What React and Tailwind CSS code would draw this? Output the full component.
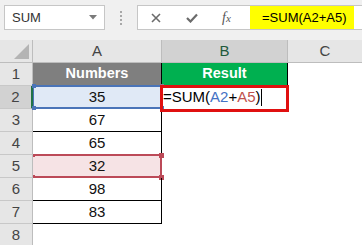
import React from "react";

const FONT = "font-['Liberation_Sans',Arial,sans-serif]";

function RowHead({ n, selected }) {
  return (
    <div
      className={`w-[33px] h-full flex items-center justify-center text-[15px] text-[#444] border-b border-b-[#c8c8c8] ${
        selected ? "bg-[#d2d2d2] border-r-2 border-r-[#217346]" : "bg-[#e6e6e6] border-r border-r-[#bdbdbd]"
      }`}
    >
      {n}
    </div>
  );
}

function Row({ n, a, selected, children, aClass = "", aOverlay = null, bContent = null, bClass = "" }) {
  return (
    <div className="flex h-[23px] shrink-0">
      <RowHead n={n} selected={selected} />
      <div
        className={`relative w-[129px] h-full flex items-center justify-center text-[15px] text-[#111] border-r border-r-black border-b border-b-black ${aClass}`}
      >
        {a}
        {aOverlay}
      </div>
      <div className={`relative w-[126px] h-full ${bClass}`}>{bContent}</div>
      <div className="flex-1 h-full bg-white">{children}</div>
    </div>
  );
}

function Handle({ className }) {
  return <div className={`absolute ${className}`} />;
}

export default function App() {
  return (
    <div className={`w-[362px] h-[245px] overflow-hidden bg-white flex flex-col ${FONT}`}>
      {/* toolbar */}
      <div className="h-[40px] shrink-0 bg-[#f0f0f0] flex items-start pt-[5px]">
        <div className="ml-[4px] w-[101px] h-[25px] bg-white border border-[#c6c6c6] flex items-center justify-between pl-[7px] pr-[7px]">
          <span className="text-[13px] text-[#333] leading-none">SUM</span>
          <svg width="8" height="5" viewBox="0 0 8 5">
            <polygon points="0,0 8,0 4,4.5" fill="#7a7a7a" />
          </svg>
        </div>
        <div className="w-[32px] h-[25px] flex flex-col items-center justify-center gap-[2px]">
          <div className="w-[2px] h-[2px] bg-[#a8a8a8]" />
          <div className="w-[2px] h-[2px] bg-[#a8a8a8]" />
          <div className="w-[2px] h-[2px] bg-[#a8a8a8]" />
          <div className="w-[2px] h-[2px] bg-[#a8a8a8]" />
        </div>
        <div className="flex-1 h-[25px] bg-white border border-[#c6c6c6] border-r-0 flex items-stretch">
          <div className="w-[112px] flex items-center">
            <svg className="ml-[13px]" width="10" height="10" viewBox="0 0 10 10">
              <path d="M1 1 L9 9 M9 1 L1 9" stroke="#6b6b6b" strokeWidth="1.6" />
            </svg>
            <svg className="ml-[25px]" width="12" height="10" viewBox="0 0 12 10">
              <path d="M1 5 L4.5 8.5 L11 1.5" stroke="#6b6b6b" strokeWidth="2.2" fill="none" />
            </svg>
            <span className="ml-[24px] font-['Liberation_Serif',serif] italic text-[14px] text-[#555] leading-none">
              f<span className="text-[11px]">x</span>
            </span>
          </div>
          <div className="w-[104px] bg-[#ffff00] flex items-center pl-[12px] text-[13px] text-black">
            =SUM(A2+A5)
          </div>
          <div className="flex-1" />
        </div>
      </div>

      {/* column headers */}
      <div className="flex h-[23px] shrink-0 border-b border-b-[#bdbdbd] bg-[#e6e6e6]">
        <div className="w-[33px] h-full border-r border-r-[#bdbdbd] relative">
          <svg className="absolute left-0 top-0" width="32" height="22" viewBox="0 0 32 22">
            <polygon points="14,19 29,19 29,4" fill="#b4b4b4" />
          </svg>
        </div>
        <div className="w-[129px] h-full border-r border-r-[#bdbdbd] flex items-center justify-center text-[15px] text-[#444]">
          A
        </div>
        <div className="w-[126px] h-full border-r border-r-[#bdbdbd] bg-[#d2d2d2] flex items-center justify-center text-[15px] text-[#1f5a3c]">
          B
        </div>
        <div className="flex-1 h-full flex items-center justify-center text-[15px] text-[#444]">C</div>
      </div>

      {/* row 1 */}
      <Row
        n={1}
        a={<span className="font-bold text-white text-[14.5px]">Numbers</span>}
        aClass="bg-[#7f7f7f]"
        bClass="bg-[#00b050] border-r border-r-black border-b border-b-black flex items-center justify-center"
        bContent={<span className="font-bold text-white text-[14.5px]">Result</span>}
      />
      {/* row 2 */}
      <Row
        n={2}
        selected
        a="35"
        aClass="bg-[#e0e9f6]"
        aOverlay={
          <>
            <div className="absolute left-0 right-[-1px] top-[-1px] bottom-[-1px] border-y-2 border-y-[#4a74b8] border-l border-l-[#4a74b8]" />
            <Handle className="left-[-1px] top-[-2px] w-[4px] h-[4px] bg-[#4a74b8]" />
            <Handle className="left-[-1px] bottom-[-2px] w-[4px] h-[4px] bg-[#4a74b8]" />
            <Handle className="right-[-3px] top-[-2px] w-[4px] h-[4px] bg-[#8a7a94]" />
            <Handle className="right-[-3px] bottom-[-2px] w-[4px] h-[4px] bg-[#4a74b8]" />
          </>
        }
        bContent={
          <>
            <div className="absolute left-[-2px] top-[-1px] w-[129px] h-[27px] border-[3px] border-[#e01010] z-10" />
            <div className="absolute left-[1px] top-0 h-full flex items-center text-[15px] text-black whitespace-nowrap z-20">
              =SUM(<span className="text-[#4472c4]">A2</span>+<span className="text-[#c0504d]">A5</span>)
              <span className="w-[1px] h-[17px] bg-black inline-block" />
            </div>
          </>
        }
      />
      <Row n={3} a="67" />
      <Row n={4} a="65" />
      {/* row 5 */}
      <Row
        n={5}
        a="32"
        aClass="bg-[#f6e3e5]"
        aOverlay={
          <>
            <div className="absolute left-0 right-[-1px] top-[-1px] bottom-[-1px] border-y-2 border-y-[#bc4a58] border-r-2 border-r-[#bc4a58]" />
            <Handle className="left-0 top-[-1px] w-[2px] h-[3px] bg-[#bc4a58]" />
            <Handle className="left-0 bottom-[-1px] w-[2px] h-[3px] bg-[#bc4a58]" />
            <Handle className="right-[-3px] top-[-2px] w-[5px] h-[5px] bg-[#bc4a58]" />
            <Handle className="right-[-3px] bottom-[-3px] w-[5px] h-[5px] bg-[#bc4a58]" />
          </>
        }
      />
      <Row n={6} a="98" />
      <Row n={7} a="83" />
      {/* row 8 */}
      <div className="flex h-[23px] shrink-0">
        <RowHead n={8} />
        <div className="flex-1 bg-white" />
      </div>
    </div>
  );
}
